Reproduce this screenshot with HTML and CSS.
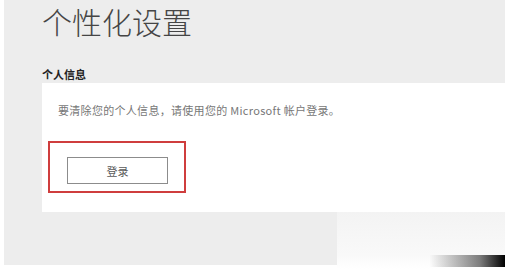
FILE: index.html
```html
<!DOCTYPE html>
<html lang="zh-CN">
<head>
<meta charset="utf-8">
<link rel="stylesheet" href="styles.css">
</head>
<body>
<div class="panel">
  <h1 class="title">个性化设置</h1>
  <div class="section-label">个人信息</div>
  <div class="card">
    <p class="card-text">要清除您的个人信息，请使用您的 Microsoft 帐户登录。</p>
    <div class="highlight">
      <button class="login-btn">登录</button>
    </div>
  </div>
</div>
<div class="watermark"></div>
</body>
</html>
```

FILE: styles.css
```css
html, body {
  margin: 0;
  padding: 0;
}
body {
  width: 505px;
  height: 271px;
  background: #ffffff;
  font-family: "Noto Sans CJK SC", "Noto Sans", sans-serif;
  position: relative;
  overflow: hidden;
}
.panel {
  margin-left: 4px;
  height: 265px;
  background: #ededed;
  padding-left: 38px;
  box-sizing: border-box;
  display: flex;
  flex-direction: column;
}
.title {
  margin: 0;
  padding-top: 3px;
  font-size: 30px;
  line-height: 36px;
  font-weight: 300;
  color: #454545;
  letter-spacing: 0;
}
.section-label {
  margin-top: 28px;
  font-size: 11px;
  line-height: 14px;
  font-weight: 700;
  color: #222;
}
.card {
  margin-top: 2px;
  background: #ffffff;
  padding: 20px 0 19px 16px;
}
.card-text {
  margin: 0;
  font-size: 11px;
  line-height: 14px;
  color: #777777;
  letter-spacing: 0.3px;
}
.highlight {
  margin: 24px 0 0 -10px;
  width: 134px;
  height: 48px;
  border: 2px solid #cf3d3d;
  box-sizing: content-box;
}
.login-btn {
  display: flex;
  align-items: center;
  justify-content: center;
  margin: 14px 0 0 17px;
  width: 101px;
  height: 27px;
  border: 1px solid #8c8c8c;
  background: #ffffff;
  font-family: "Noto Sans CJK SC", sans-serif;
  font-size: 11px;
  color: #5a5a5a;
  padding: 0;
  box-sizing: border-box;
}
.watermark {
  position: absolute;
  left: 337px;
  top: 212px;
  width: 168px;
  height: 57px;
  background:
    linear-gradient(to right, rgba(0,0,0,0) 0%, rgba(0,0,0,0) 55%, rgba(40,40,40,0.6) 85%, #000 100%) 0 43px / 100% 12px no-repeat,
    linear-gradient(to bottom, #f3f3f3 0%, #f9f9f9 75%, #ffffff 100%);
}
```
